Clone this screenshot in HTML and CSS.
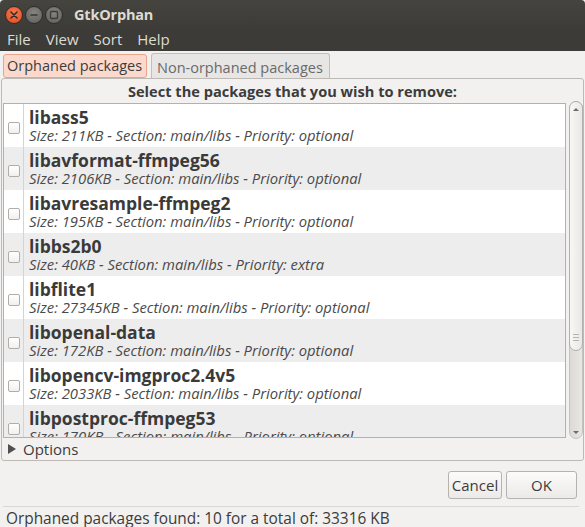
FILE: index.html
```html
<!DOCTYPE html>
<html>
<head>
<meta charset="utf-8">
<link rel="stylesheet" href="styles.css">
</head>
<body>
<div class="window">
  <div class="titlebar">
    <div class="wbtns">
      <span class="wbtn close"><svg width="18" height="18" viewBox="0 0 18 18"><path d="M6 6 L12 12 M12 6 L6 12" stroke="#3a2a22" stroke-width="1.6" stroke-linecap="round"/></svg></span>
      <span class="wbtn"><svg width="18" height="18" viewBox="0 0 18 18"><path d="M5.5 9 H12.5" stroke="#3c3b37" stroke-width="1.6"/></svg></span>
      <span class="wbtn"><svg width="18" height="18" viewBox="0 0 18 18"><rect x="5.5" y="5.5" width="7" height="7" rx="1" fill="none" stroke="#3c3b37" stroke-width="1.3"/></svg></span>
    </div>
    <div class="title">GtkOrphan</div>
  </div>
  <div class="menubar">
    <span class="menu">File</span>
    <span class="menu">View</span>
    <span class="menu">Sort</span>
    <span class="menu">Help</span>
  </div>
  <div class="content">
    <div class="tabs">
      <div class="tab active">Orphaned packages</div>
      <div class="tab">Non-orphaned packages</div>
    </div>
    <div class="page">
      <div class="heading">Select the packages that you wish to remove:</div>
      <div class="listrow">
        <div class="list">
          <div class="row"><div class="chk"><span class="box"></span></div><div class="info"><div class="name">libass5</div><div class="detail">Size: 211KB - Section: main/libs - Priority: optional</div></div></div>
          <div class="row alt"><div class="chk"><span class="box"></span></div><div class="info"><div class="name">libavformat-ffmpeg56</div><div class="detail">Size: 2106KB - Section: main/libs - Priority: optional</div></div></div>
          <div class="row"><div class="chk"><span class="box"></span></div><div class="info"><div class="name">libavresample-ffmpeg2</div><div class="detail">Size: 195KB - Section: main/libs - Priority: optional</div></div></div>
          <div class="row alt"><div class="chk"><span class="box"></span></div><div class="info"><div class="name">libbs2b0</div><div class="detail">Size: 40KB - Section: main/libs - Priority: extra</div></div></div>
          <div class="row"><div class="chk"><span class="box"></span></div><div class="info"><div class="name">libflite1</div><div class="detail">Size: 27345KB - Section: main/libs - Priority: optional</div></div></div>
          <div class="row alt"><div class="chk"><span class="box"></span></div><div class="info"><div class="name">libopenal-data</div><div class="detail">Size: 172KB - Section: main/libs - Priority: optional</div></div></div>
          <div class="row"><div class="chk"><span class="box"></span></div><div class="info"><div class="name">libopencv-imgproc2.4v5</div><div class="detail">Size: 2033KB - Section: main/libs - Priority: optional</div></div></div>
          <div class="row alt"><div class="chk"><span class="box"></span></div><div class="info"><div class="name">libpostproc-ffmpeg53</div><div class="detail">Size: 170KB - Section: main/libs - Priority: optional</div></div></div>
        </div>
        <div class="scrollbar">
          <div class="trough">
            <div class="thumb"><span class="arrow up"></span><span class="grip"></span></div>
            <span class="arrow down"></span>
          </div>
        </div>
      </div>
      <div class="options"><span class="tri"></span>Options</div>
    </div>
    <div class="buttons">
      <div class="btn cancel">Cancel</div>
      <div class="btn ok">OK</div>
    </div>
    <div class="status">Orphaned packages found: 10 for a total of: 33316 KB</div>
  </div>
  <div class="bottomedge"></div>
</div>
</body>
</html>
```
FILE: styles.css
```css
* { box-sizing: border-box; }
html, body { margin: 0; padding: 0; }
body {
  width: 585px;
  height: 527px;
  overflow: hidden;
  background: #000;
  font-family: "Open Sans", "Noto Sans", sans-serif;
  color: #3c3c3c;
}
.window {
  width: 585px;
  height: 527px;
  display: flex;
  flex-direction: column;
  background: #f2f1f0;
  overflow: hidden;
}
.titlebar {
  height: 30px;
  flex: none;
  background: linear-gradient(#45443f, #3c3b37);
  display: flex;
  align-items: center;
  padding-left: 5px;
  padding-bottom: 1px;
  border-radius: 4px 4px 0 0;
}
.wbtns { display: flex; gap: 2px; }
.wbtn {
  width: 18px;
  height: 18px;
  border-radius: 50%;
  background: radial-gradient(circle at 50% 35%, #85847f, #5f5e5a);
  border: 1px solid #2f2e2b;
  display: flex;
  align-items: center;
  justify-content: center;
}
.wbtn svg { display: block; margin: -1px; }
.wbtn.close { background: radial-gradient(circle at 50% 35%, #f47a52, #dd4a20); border-color: #3a2a22; }
.title {
  margin-left: 11px;
  color: #dfdbd2;
  font-weight: bold;
  font-size: 14.5px;
  letter-spacing: -0.2px;
}
.menubar {
  height: 21px;
  flex: none;
  background: #3c3b37;
  display: flex;
  align-items: flex-start;
  padding-left: 7px;
}
.menu {
  color: #dfdbd2;
  font-size: 15px;
  margin-right: 15px;
  line-height: 19px;
}
.content {
  flex: 1;
  display: flex;
  flex-direction: column;
  padding: 2px 2px 0 1px;
}
.tabs {
  display: flex;
  padding-left: 2px;
  gap: 4px;
  height: 25px;
  flex: none;
}
.tab {
  height: 25px;
  padding: 1px 4px 0 5px;
  font-size: 14.5px;
  line-height: 25px;
  color: #6a6a6a;
  background: #e7e6e4;
  border: 1px solid #c3c0bb;
  border-bottom: none;
  border-radius: 3px 3px 0 0;
  width: 179px;
  white-space: nowrap;
}
.tab.active {
  width: 144px;
  background: #fbdacd;
  border: 1px solid #eba48c;
  border-radius: 3px;
  color: #3c3c3c;
  height: 24px;
  line-height: 22px;
  margin-top: 1px;
  padding: 0 0 0 3px;
}
.page {
  height: 383px;
  flex: none;
  border: 1px solid #bdbab5;
  border-radius: 3px;
  display: flex;
  flex-direction: column;
  width: 583px;
}
.heading {
  text-align: center;
  font-weight: bold;
  font-size: 14.6px;
  height: 23px;
  line-height: 25px;
  color: #3c3c3c;
}
.listrow {
  display: flex;
  height: 336px;
}
.list {
  margin-left: 1px;
  width: 564px;
  height: 335px;
  margin-top: 1px;
  border: 1px solid #b4b1ac;
  background: #fff;
  overflow: hidden;
}
.row {
  display: flex;
  height: 43px;
  background: #fff;
}
.row.alt { background: #ededed; }
.chk {
  width: 20px;
  flex: none;
  border-right: 1px solid #d6d4d0;
  display: flex;
  align-items: center;
  justify-content: center;
  padding-left: 1px;
  padding-top: 4px;
}
.box {
  width: 12px;
  height: 12px;
  border: 1px solid #b0ada8;
  border-radius: 2px;
  background: linear-gradient(#ffffff, #f1f0ee);
}
.info {
  padding-left: 5px;
  padding-top: 3px;
  white-space: nowrap;
}
.name {
  font-weight: bold;
  font-size: 17.5px;
  line-height: 20px;
  color: #3a3a3a;
}
.detail {
  font-style: italic;
  font-size: 14.8px;
  line-height: 16px;
  color: #4a4a4a;
}
.scrollbar {
  width: 17px;
  padding-left: 3px;
  margin-top: -1px;
  height: 338px;
}
.trough {
  width: 14px;
  height: 338px;
  border: 1px solid #c6c3be;
  border-radius: 7px;
  background: linear-gradient(90deg, #dcdad6, #e8e7e4);
  display: flex;
  flex-direction: column;
  justify-content: space-between;
  align-items: center;
  padding-bottom: 4px;
}
.thumb {
  width: 14px;
  height: 250px;
  margin-top: -1px;
  border: 1px solid #b3b0ab;
  border-radius: 7px;
  background: linear-gradient(90deg, #f7f7f6, #e9e8e6);
  display: flex;
  flex-direction: column;
  align-items: center;
  justify-content: space-between;
  padding: 6px 0 8px;
}
.arrow {
  width: 0; height: 0;
  border-left: 3px solid transparent;
  border-right: 3px solid transparent;
}
.arrow.up { border-bottom: 3px solid #6e6c68; }
.arrow.down { border-top: 3px solid #6e6c68; }
.grip {
  width: 6px;
  height: 8px;
  background: repeating-linear-gradient(#b7b4af 0 1px, transparent 1px 3px);
}
.options {
  height: 22px;
  display: flex;
  align-items: center;
  font-size: 15px;
  color: #3c3c3c;
  padding-left: 6px;
}
.tri {
  width: 0; height: 0;
  border-top: 5px solid transparent;
  border-bottom: 5px solid transparent;
  border-left: 8px solid #505050;
  margin-right: 7px;
}
.buttons {
  display: flex;
  justify-content: flex-end;
  gap: 4px;
  padding: 10px 2px 0 0;
  height: 46px;
  flex: none;
  border-bottom: 1px solid #d9d7d3;
  margin: 0 4px 0 2px;
}
.btn {
  height: 28px;
  border: 1px solid #b6b3ae;
  border-radius: 3px;
  background: linear-gradient(#fbfbfa, #eceae8);
  font-size: 15px;
  line-height: 26px;
  text-align: center;
  color: #3c3c3c;
}
.btn.cancel { width: 54px; }
.btn.ok { width: 71px; }
.status {
  font-size: 15.4px;
  padding-left: 5px;
  line-height: 17px;
  padding-top: 3px;
  color: #3c3c3c;
  white-space: nowrap;
}
.bottomedge {
  height: 3px;
  background: #111;
  flex: none;
}
```
